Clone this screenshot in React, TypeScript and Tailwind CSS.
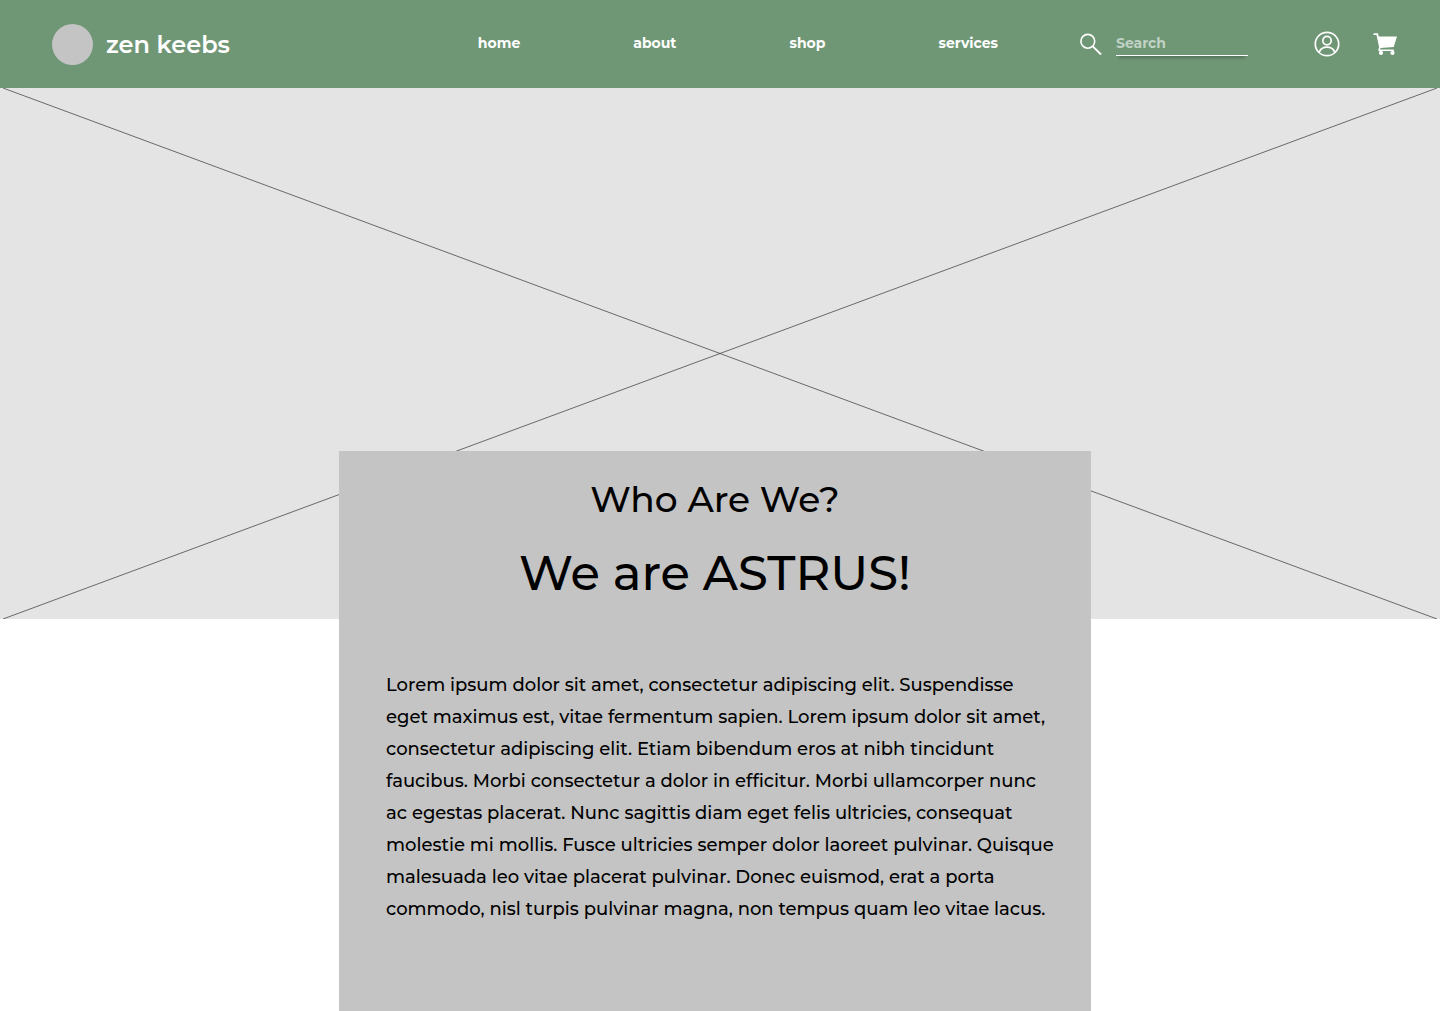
const links = ["home", "about", "shop", "services"];

const lines = [
  "Lorem ipsum dolor sit amet, consectetur adipiscing elit. Suspendisse",
  "eget maximus est, vitae fermentum sapien. Lorem ipsum dolor sit amet,",
  "consectetur adipiscing elit. Etiam bibendum eros at nibh tincidunt",
  "faucibus. Morbi consectetur a dolor in efficitur. Morbi ullamcorper nunc",
  "ac egestas placerat. Nunc sagittis diam eget felis ultricies, consequat",
  "molestie mi mollis. Fusce ultricies semper dolor laoreet pulvinar. Quisque",
  "malesuada leo vitae placerat pulvinar. Donec euismod, erat a porta",
  "commodo, nisl turpis pulvinar magna, non tempus quam leo vitae lacus.",
];

function SearchIcon() {
  return (
    <svg viewBox="0 0 22 22" className="size-[22px]" fill="none" stroke="currentColor" aria-hidden="true">
      <circle cx="7.800" cy="8.300" r="6.900" strokeWidth="1.600" />
      <path d="M12.800 13.300l8.200 8.200" strokeWidth="1.900" />
    </svg>
  );
}

function UserIcon() {
  return (
    <svg viewBox="0 0 26 26" className="size-[26px]" fill="none" stroke="currentColor" strokeWidth="1.7" aria-hidden="true">
      <circle cx="13" cy="13" r="11.7" />
      <circle cx="13" cy="9.6" r="4.2" />
      <path d="M5.2 21.2c1.3-3.2 4.2-5 7.8-5s6.500 1.800 7.800 5" />
    </svg>
  );
}

function CartIcon() {
  return (
    <svg viewBox="0 0 25 23" className="h-[23px] w-[25px]" fill="currentColor" aria-hidden="true">
      <path d="M0.500 0.300h4.400l0.900 3.300h18.200l-3.300 10.300-13.100 1.200-0.500 1.500h13.700v1.500H5.600l-0.400-1.200 0.900-2.700L3.500 2.100H0.500z" />
      <circle cx="8" cy="19.900" r="2.100" />
      <circle cx="19.500" cy="19.900" r="2.100" />
    </svg>
  );
}

export default function App() {
  return (
    <div className="flex min-h-screen flex-col bg-white font-['Montserrat','Inter',sans-serif] text-black">
      <header className="flex h-22 items-center bg-[#6f9776] pr-[42px] pl-13 text-white">
        <a href="#" className="flex items-center gap-[13px]">
          <span className="size-[41px] rounded-full bg-[#c4c4c4]" />
          <span className="text-2xl leading-[41px] font-semibold">zen keebs</span>
        </a>
        <nav className="mr-[82px] ml-auto flex gap-[113px] pb-0.5 text-sm font-bold">
          {links.map((link) => (
            <a key={link} href="#">
              {link}
            </a>
          ))}
        </nav>
        <form role="search" className="mr-[66px] flex items-center gap-[14px]">
          <button type="submit" aria-label="Submit search">
            <SearchIcon />
          </button>
          <input
            type="search"
            aria-label="Search"
            placeholder="Search"
            className="h-6 w-[132px] border-b border-white bg-transparent pb-0.5 text-sm font-bold shadow-[0_5px_3px_-3px_rgba(0,0,0,0.25)] outline-none placeholder:text-[#c0d2c3]"
          />
        </form>
        <div className="flex items-center gap-[33px]">
          <button type="button" aria-label="Account">
            <UserIcon />
          </button>
          <button type="button" aria-label="Cart">
            <CartIcon />
          </button>
        </div>
      </header>
      <main className="flex flex-1 flex-col">
        <div className="h-[531px] bg-[#e4e4e4]">
          <svg
            viewBox="0 0 1440 531"
            preserveAspectRatio="none"
            className="size-full"
            stroke="#333333"
            strokeWidth="0.7"
            role="img"
            aria-label="Image placeholder"
          >
            <path d="M3 0L1437 531M1437 0L3 531" />
          </svg>
        </div>
        <div className="flex flex-1 justify-center pr-[10px]">
          <section className="relative -mt-42 w-full max-w-[752px] bg-[#c4c4c4] px-[47px] pt-6 pb-[86px]">
            <h1 className="text-center text-4xl leading-12 font-medium">Who Are We?</h1>
            <h2 className="mt-5 text-center text-5xl leading-15 font-medium">We are ASTRUS!</h2>
            <p className="mt-[66px] text-lg leading-8 font-medium">
              {lines.map((line) => (
                <span key={line} className="block whitespace-nowrap">
                  {line}
                </span>
              ))}
            </p>
          </section>
        </div>
      </main>
    </div>
  );
}
